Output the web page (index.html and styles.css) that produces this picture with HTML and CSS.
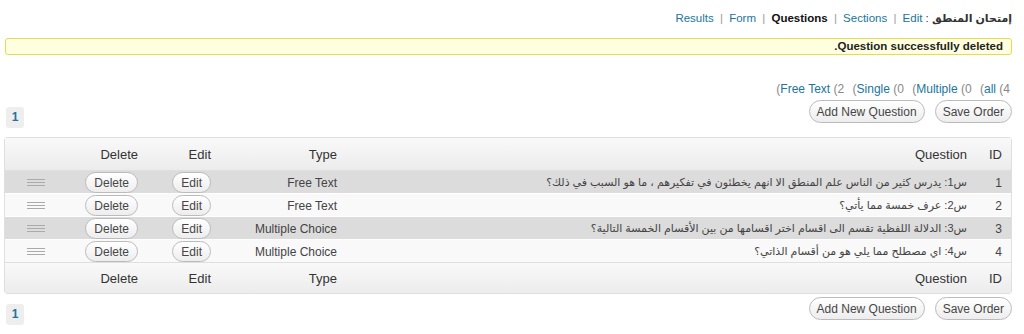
FILE: index.html
```html
<!DOCTYPE html>
<html lang="ar" dir="rtl">
<head>
    <meta charset="UTF-8">
    <title>إمتحان المنطق</title>
    <link rel="stylesheet" href="styles.css">
</head>
<body>
<div class="wrap">
    <div class="nav">
        <strong class="title">إمتحان المنطق</strong> :
        <a class="item" href="#">Edit</a> <span class="sep">|</span>
        <a class="item" href="#">Sections</a> <span class="sep">|</span>
        <strong class="item">Questions</strong> <span class="sep">|</span>
        <a class="item" href="#">Form</a> <span class="sep">|</span>
        <a class="item" href="#">Results</a>
    </div>

    <div class="notice">Question successfully deleted.</div>

    <!-- الأقواس تظهر كما في النسخة الأصلية -->
    <ul class="filters">
        <li>(<a href="#">all</a> (4</li>
        <li>(<a href="#">Multiple</a> (0</li>
        <li>(<a href="#">Single</a> (0</li>
        <li>(<a href="#">Free Text</a> (2</li>
    </ul>

    <!-- أزرار أعلى الجدول -->
    <div class="tablenav">
        <div class="actions">
            <button class="btn">Save Order</button>
            <button class="btn">Add New Question</button>
        </div>
        <div class="pages"><span class="page">1</span></div>
    </div>

    <table class="questions">
        <colgroup>
            <col style="width:32px">
            <col style="width:635px">
            <col style="width:125px">
            <col style="width:72px">
            <col style="width:80px">
            <col style="width:62px">
        </colgroup>
        <thead>
            <tr>
                <th class="c-id">ID</th>
                <th class="c-q">Question</th>
                <th class="c-type">Type</th>
                <th class="c-edit">Edit</th>
                <th class="c-del">Delete</th>
                <th></th>
            </tr>
        </thead>
        <tbody>
            <tr class="alt">
                <td class="c-id">1</td>
                <td class="c-q">س1: يدرس كثير من الناس علم المنطق الا انهم يخطئون في تفكيرهم ، ما هو السبب في ذلك؟</td>
                <td class="c-type">Free Text</td>
                <td class="c-edit"><button class="btn small">Edit</button></td>
                <td class="c-del"><button class="btn small">Delete</button></td>
                <td class="c-drag"><span class="handle"></span></td>
            </tr>
            <tr>
                <td class="c-id">2</td>
                <td class="c-q">س2: عرف خمسة مما يأتي؟</td>
                <td class="c-type">Free Text</td>
                <td class="c-edit"><button class="btn small">Edit</button></td>
                <td class="c-del"><button class="btn small">Delete</button></td>
                <td class="c-drag"><span class="handle"></span></td>
            </tr>
            <tr class="alt">
                <td class="c-id">3</td>
                <td class="c-q">س3: الدلالة اللفظية تقسم الى اقسام اختر اقسامها من بين الأقسام الخمسة التالية؟</td>
                <td class="c-type">Multiple Choice</td>
                <td class="c-edit"><button class="btn small">Edit</button></td>
                <td class="c-del"><button class="btn small">Delete</button></td>
                <td class="c-drag"><span class="handle"></span></td>
            </tr>
            <tr>
                <td class="c-id">4</td>
                <td class="c-q">س4: اي مصطلح مما يلي هو من أقسام الذاتي؟</td>
                <td class="c-type">Multiple Choice</td>
                <td class="c-edit"><button class="btn small">Edit</button></td>
                <td class="c-del"><button class="btn small">Delete</button></td>
                <td class="c-drag"><span class="handle"></span></td>
            </tr>
        </tbody>
        <tfoot>
            <tr>
                <th class="c-id">ID</th>
                <th class="c-q">Question</th>
                <th class="c-type">Type</th>
                <th class="c-edit">Edit</th>
                <th class="c-del">Delete</th>
                <th></th>
            </tr>
        </tfoot>
    </table>

    <!-- أزرار أسفل الجدول -->
    <div class="tablenav bottom">
        <div class="actions">
            <button class="btn">Save Order</button>
            <button class="btn">Add New Question</button>
        </div>
        <div class="pages"><span class="page">1</span></div>
    </div>
</div>
</body>
</html>
```

FILE: styles.css
```css
body {
    margin: 0;
    background-color: #fff;
    color: #333;
    font-family: "Liberation Sans", "DejaVu Sans", sans-serif;
    font-size: 12px;
    direction: rtl;
}
a {
    color: #21759b;
    text-decoration: none;
}
.wrap {
    padding: 0 12px 0 5px;
}
.nav {
    padding-top: 10px;
    line-height: 16px;
    height: 16px;
    font-size: 11.5px;
}
.nav .title {
    color: #333;
    font-size: 11px;
}
.nav .item {
    unicode-bidi: isolate;
}
.nav strong.item {
    color: #111;
}
.nav .sep {
    color: #999;
    margin: 0 3px;
}
.notice {
    margin-top: 12px;
    background-color: #ffffe0;
    border: 1px solid #e6db55;
    border-radius: 3px;
    padding: 1px 8px;
    line-height: 13px;
    font-size: 11.5px;
    font-weight: bold;
    color: #222;
}
.filters {
    list-style: none;
    margin: 26px 2px 0 0;
    padding: 0;
    line-height: 16px;
    color: #888;
}
.filters li {
    display: inline-block;
    direction: ltr;
    margin-left: 5px;
}
.tablenav {
    display: flex;
    justify-content: space-between;
    align-items: flex-start;
    margin-top: 3px;
    height: 37px;
}
.actions {
    display: flex;
    gap: 10px;
}
.btn {
    font-family: inherit;
    font-size: 12px;
    color: #464646;
    background: linear-gradient(#fff, #ededed);
    border: 1px solid #bbb;
    border-radius: 12px;
    height: 23px;
    padding: 0 7px;
    cursor: pointer;
}
.btn.small {
    height: 21px;
    border-radius: 11px;
    padding: 0 8px;
}
.pages {
    padding: 7px 0 0 0;
    margin-left: 1px;
}
.page {
    display: inline-block;
    width: 18px;
    height: 21px;
    line-height: 21px;
    text-align: center;
    background-color: #eee;
    border-radius: 3px;
    color: #21759b;
    font-weight: bold;
}
.questions {
    width: 1006px;
    table-layout: fixed;
    border-collapse: separate;
    border-spacing: 0;
    border: 1px solid #dfdfdf;
    border-radius: 3px;
}
.questions th {
    font-weight: normal;
    font-size: 13px;
    color: #333;
    background: linear-gradient(#f9f9f9, #ececec);
    text-align: right;
    padding: 0 8px;
}
.questions thead th {
    height: 32px;
    border-bottom: 1px solid #dfdfdf;
}
.questions tfoot th {
    height: 30px;
    border-top: 1px solid #dfdfdf;
}
.questions td {
    height: 21px;
    padding: 1px 8px 0;
    color: #444;
    background-color: #f9f9f9;
    border-top: 1px solid #fff;
    white-space: nowrap;
    overflow: hidden;
}
.questions tbody tr:first-child td {
    border-top: none;
}
.questions tr.alt td {
    background-color: #dcdcdc;
}
.questions .c-id {
    padding-right: 9px;
}
.questions .c-q {
    padding-right: 12px;
}
.questions td.c-q {
    font-size: 11px;
}
.questions .c-type {
    padding-right: 7px;
}
.questions .c-del {
    padding-right: 9px;
}
.questions .c-drag {
    text-align: center;
    padding: 0 1px 0 0;
}
.handle {
    display: inline-block;
    width: 18px;
    height: 2px;
    border-top: 1px solid #aaa;
    border-bottom: 1px solid #aaa;
    position: relative;
    vertical-align: 3px;
}
.handle::after {
    content: "";
    position: absolute;
    right: 0;
    left: 0;
    top: 5px;
    border-top: 1px solid #aaa;
}
.tablenav.bottom {
    margin-top: 3px;
}
```
